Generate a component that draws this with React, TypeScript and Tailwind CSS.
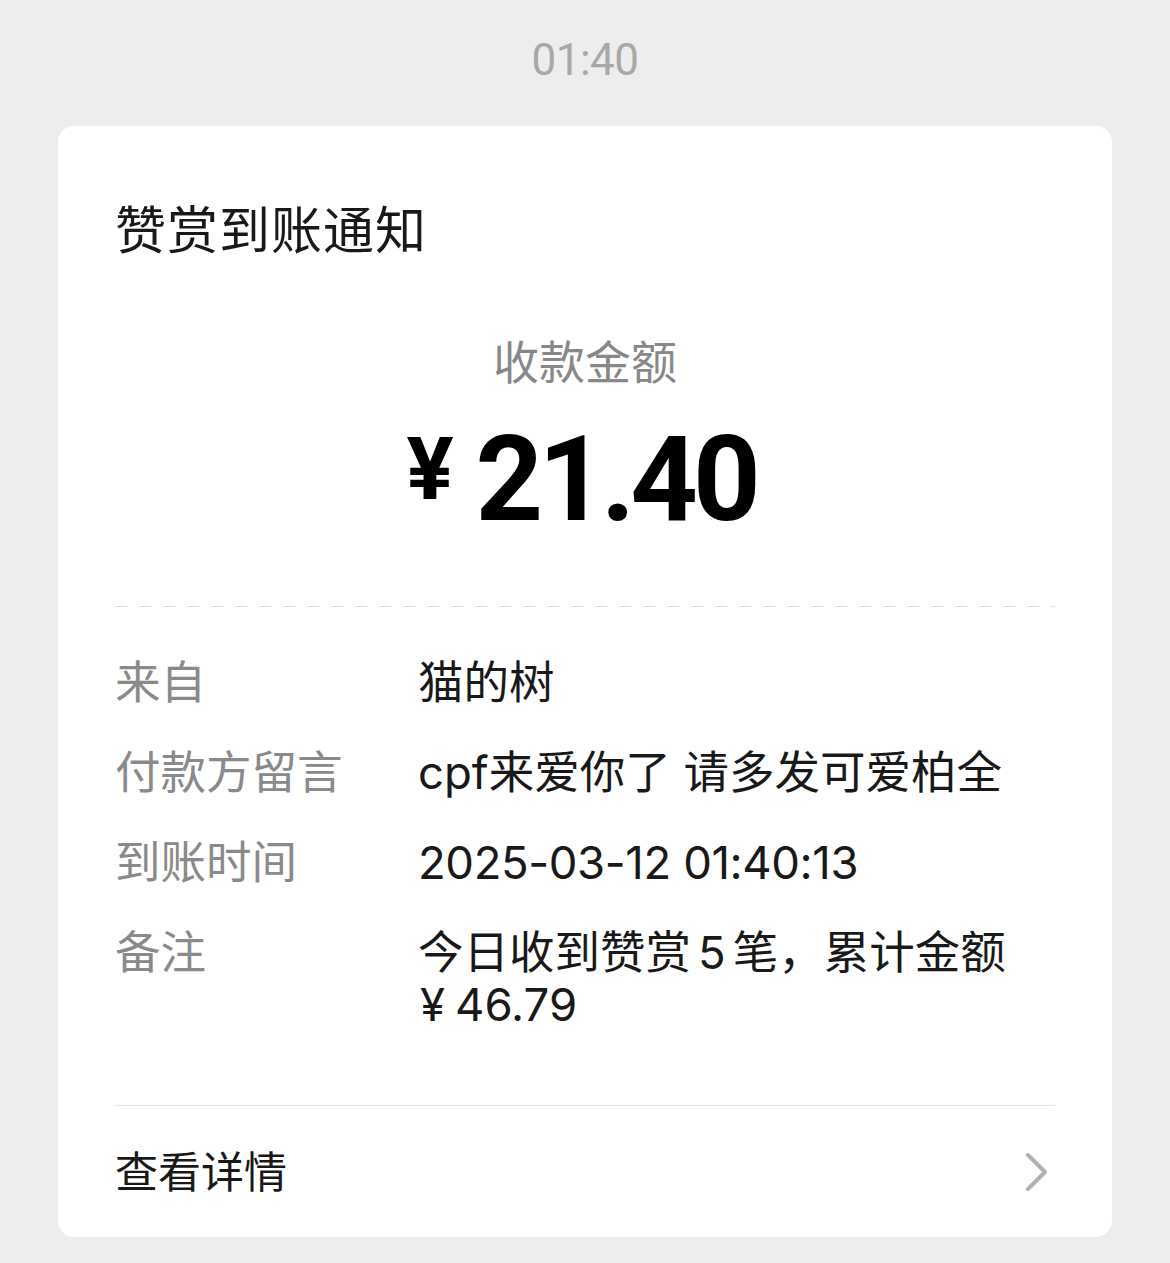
import React from "react";

const font = { fontFamily: '"Inter", "Noto Sans CJK SC", sans-serif' };

function Row({ label, children }: { label: string; children: React.ReactNode }) {
  return (
    <div className="flex items-start">
      <div className="w-[303px] shrink-0 text-[#8a8a8a] text-[45.5px] leading-[52px]">{label}</div>
      <div className="flex-1 text-[#191919] text-[45.5px] leading-[52px]">{children}</div>
    </div>
  );
}

export default function App() {
  return (
    <div className="w-[1170px] min-h-[1263px] bg-[#ededed] flex flex-col" style={font}>
      <div
        className="pt-[36px] h-[84px] text-center text-[44px] leading-[48px] text-[#a8a8a8] tracking-[-0.5px]"
        style={{ fontFamily: '"Roboto", sans-serif' }}
      >
        01:40
      </div>
      <div className="mt-[42px] mx-[58px] bg-white rounded-[16px] px-[57px] flex flex-col">
        <div className="pt-[75px] text-[51px] leading-[60px] text-[#191919] tracking-[1px]">赞赏到账通知</div>
        <div className="mt-[71px] text-center text-[46px] leading-[60px] text-[#888888]">收款金额</div>
        <div
          className="mt-[28px] pr-[8px] flex justify-center items-start text-black"
          style={{ fontFamily: '"Roboto", sans-serif' }}
        >
          <span className="text-[88px] leading-[88px] font-bold mt-[5px] mr-[22px]">¥</span>
          <span className="text-[118px] leading-[120px] font-bold tracking-[-5px]">21.40</span>
        </div>
        <div className="mt-[66px] h-[1px] bg-[repeating-linear-gradient(to_right,#dcdcdc_0px,#dcdcdc_12px,transparent_12px,transparent_24px)]" />
        <div className="mt-[50px] flex flex-col gap-[38px]">
          <Row label="来自">猫的树</Row>
          <Row label="付款方留言">cpf来爱你了 请多发可爱柏全</Row>
          <Row label="到账时间">
            <span className="tracking-[-0.4px]">2025-03-12 01:40:13</span>
          </Row>
          <Row label="备注">
            今日收到赞赏<span className="mx-[7px]">5</span>笔，累计金额
            <br />
            <span className="ml-[2px]">¥</span>
            <span className="ml-[10px]">46.79</span>
          </Row>
        </div>
        <div className="mt-[74px] h-[1px] bg-[#e5e5e5]" />
        <div className="h-[131px] flex items-center justify-between">
          <span className="text-[43px] leading-[52px] text-[#191919]">查看详情</span>
          <svg width="26" height="42" viewBox="0 0 26 42" className="mr-[5px]">
            <polyline
              points="4,4 21,21 4,38"
              fill="none"
              stroke="#b2b2b2"
              strokeWidth="4"
              strokeLinecap="round"
              strokeLinejoin="round"
            />
          </svg>
        </div>
      </div>
    </div>
  );
}
